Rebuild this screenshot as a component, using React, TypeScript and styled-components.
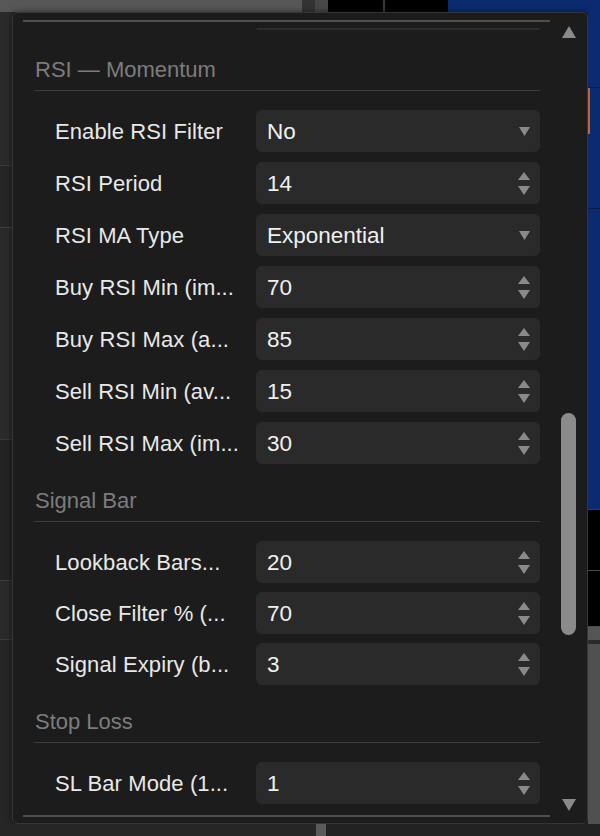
import React from "react";
import styled, { createGlobalStyle } from "styled-components";

const GlobalStyle = createGlobalStyle`
  html, body {
    margin: 0;
    padding: 0;
    background: #222222;
  }
  body {
    font-family: "Liberation Sans", Arial, sans-serif;
  }
`;

const Stage = styled.div`
  width: 600px;
  height: 836px;
  display: grid;
  grid-template-columns: 12px 576px 12px;
  grid-template-rows: 12px 812px 12px;
  overflow: hidden;
  background: #242424;
`;

const TopStrip = styled.div`
  grid-column: 1 / -1;
  display: flex;
`;

const Seg = styled.div<{ $w?: number; $h?: number; $bg: string; $line?: string }>`
  flex: ${(p) => (p.$w || p.$h ? "none" : "1")};
  width: ${(p) => (p.$w ? `${p.$w}px` : "auto")};
  height: ${(p) => (p.$h ? `${p.$h}px` : "auto")};
  background: ${(p) => p.$bg};
  border-bottom: ${(p) => (p.$line ? `1px solid ${p.$line}` : "none")};
`;

const SideStrip = styled.div`
  display: flex;
  flex-direction: column;
`;

const Marker = styled.div`
  height: 46px;
  background: #0a2a72;
  border-left: 2px solid #c0643a;
`;

const BottomStrip = styled.div`
  grid-column: 1 / -1;
  display: flex;
`;

const Panel = styled.div`
  background: #1c1c1c;
  border: 1px solid #363636;
  border-radius: 6px;
  display: flex;
  box-shadow: 0 0 6px rgba(0, 0, 0, 0.5);
`;

const Viewport = styled.div`
  flex: 1;
  margin: 7px 0 6px 10px;
  border-top: 2px solid #4e4e4e;
  border-bottom: 2px solid #4e4e4e;
  overflow: hidden;
`;

const Content = styled.div`
  padding: 0 10px 0 11px;
`;

const PrevTail = styled.div`
  height: 2px;
  margin: 6px 0 3px 222px;
  background: #2c2c2c;
  border-radius: 0 0 4px 4px;
`;

const SectionHeader = styled.div`
  padding: 25px 0 8px 1px;
  line-height: 24px;
  font-size: 22px;
  color: #7c7c7c;
  border-bottom: 1px solid #3c3c3c;
`;

const Rows = styled.div<{ $gap: number }>`
  display: flex;
  flex-direction: column;
  gap: ${(p) => p.$gap}px;
  padding-top: 19px;
`;

const Row = styled.div`
  display: flex;
  align-items: center;
  height: 42px;
  padding-left: 21px;
`;

const Label = styled.div`
  width: 201px;
  flex: none;
  padding-top: 1px;
  font-size: 22px;
  letter-spacing: 0.1px;
  color: #e8e8e8;
  white-space: nowrap;
  overflow: hidden;
`;

const Field = styled.div`
  flex: 1;
  height: 100%;
  display: flex;
  align-items: center;
  justify-content: space-between;
  padding: 0 10px 0 11px;
  background: #2a2a2a;
  border-radius: 6px;
  font-size: 22.5px;
  color: #f0f0f0;
`;

const Value = styled.span`
  padding-top: 2px;
`;

const Spinner = styled.div`
  display: flex;
  flex-direction: column;
  gap: 6px;
`;

const ScrollColumn = styled.div`
  width: 37px;
  flex: none;
  display: flex;
  flex-direction: column;
  align-items: center;
  padding: 13px 0 12px;
`;

const Track = styled.div`
  flex: 1;
  display: flex;
  flex-direction: column;
  align-items: center;
`;

const Thumb = styled.div<{ $top: number; $height: number }>`
  margin-top: ${(p) => p.$top}px;
  width: 15px;
  height: ${(p) => p.$height}px;
  border-radius: 8px;
  background: #8b8b8b;
`;

const Tri = ({ up, w, h, color = "#8a8a8a" }: { up?: boolean; w: number; h: number; color?: string }) => (
  <svg width={w} height={h} viewBox={`0 0 ${w} ${h}`} style={{ display: "block" }}>
    <polygon points={up ? `${w / 2},0 ${w},${h} 0,${h}` : `0,0 ${w},0 ${w / 2},${h}`} fill={color} />
  </svg>
);

type Item = { label: string; value: string; kind: "select" | "number" };

const sections: { title: string; gap: number; items: Item[] }[] = [
  {
    title: "RSI — Momentum",
    gap: 10,
    items: [
      { label: "Enable RSI Filter", value: "No", kind: "select" },
      { label: "RSI Period", value: "14", kind: "number" },
      { label: "RSI MA Type", value: "Exponential", kind: "select" },
      { label: "Buy RSI Min (im...", value: "70", kind: "number" },
      { label: "Buy RSI Max (a...", value: "85", kind: "number" },
      { label: "Sell RSI Min (av...", value: "15", kind: "number" },
      { label: "Sell RSI Max (im...", value: "30", kind: "number" },
    ],
  },
  {
    title: "Signal Bar",
    gap: 9,
    items: [
      { label: "Lookback Bars...", value: "20", kind: "number" },
      { label: "Close Filter % (...", value: "70", kind: "number" },
      { label: "Signal Expiry (b...", value: "3", kind: "number" },
    ],
  },
  {
    title: "Stop Loss",
    gap: 9,
    items: [{ label: "SL Bar Mode (1...", value: "1", kind: "number" }],
  },
];

const InputRow = ({ item }: { item: Item }) => (
  <Row>
    <Label>{item.label}</Label>
    <Field>
      <Value>{item.value}</Value>
      {item.kind === "select" ? (
        <Tri w={11} h={9} />
      ) : (
        <Spinner>
          <Tri up w={12} h={8} />
          <Tri w={12} h={9} />
        </Spinner>
      )}
    </Field>
  </Row>
);

export default function App() {
  return (
    <>
      <GlobalStyle />
      <Stage>
        <TopStrip>
          <Seg $w={302} $bg="#575757" />
          <Seg $w={13} $bg="#333333" />
          <Seg $w={13} $bg="#474747" />
          <Seg $w={55} $bg="#000000" />
          <Seg $w={2} $bg="#3a3a3a" />
          <Seg $w={63} $bg="#000000" />
          <Seg $bg="#0b2a70" />
        </TopStrip>

        <SideStrip>
          <Seg $h={153} $bg="#2a2a2a" $line="#3a3a3a" />
          <Seg $h={61} $bg="#262626" $line="#3e3e3e" />
          <Seg $h={211} $bg="#2a2a2a" $line="#383838" />
          <Seg $h={140} $bg="#232323" $line="#3a3a3a" />
          <Seg $h={58} $bg="#2a2a2a" $line="#3a3a3a" />
          <Seg $bg="#262626" />
        </SideStrip>

        <Panel>
          <Viewport>
            <Content>
              <PrevTail />
              {sections.map((s, i) => (
                <div key={i}>
                  <SectionHeader>{s.title}</SectionHeader>
                  <Rows $gap={s.gap}>
                    {s.items.map((it, j) => (
                      <InputRow key={j} item={it} />
                    ))}
                  </Rows>
                </div>
              ))}
            </Content>
          </Viewport>
          <ScrollColumn>
            <Tri up w={14} h={12} />
            <Track>
              <Thumb $top={375} $height={222} />
            </Track>
            <Tri w={14} h={12} />
          </ScrollColumn>
        </Panel>

        <SideStrip>
          <Seg $h={75} $bg="#0b2a70" $line="#071b4a" />
          <Marker />
          <Seg $h={74} $bg="#0b2a70" $line="#071b4a" />
          <Seg $h={300} $bg="#0b2a70" $line="#3a3a3a" />
          <Seg $h={60} $bg="#000000" $line="#4a4a4a" />
          <Seg $h={55} $bg="#000000" $line="#4a4a4a" />
          <Seg $h={13} $bg="#555555" />
          <Seg $h={4} $bg="#2a2a2a" />
          <Seg $bg="#505050" />
        </SideStrip>

        <BottomStrip>
          <Seg $w={316} $bg="#262626" />
          <Seg $w={10} $bg="#5a5a5a" />
          <Seg $bg="#222222" />
        </BottomStrip>
      </Stage>
    </>
  );
}
